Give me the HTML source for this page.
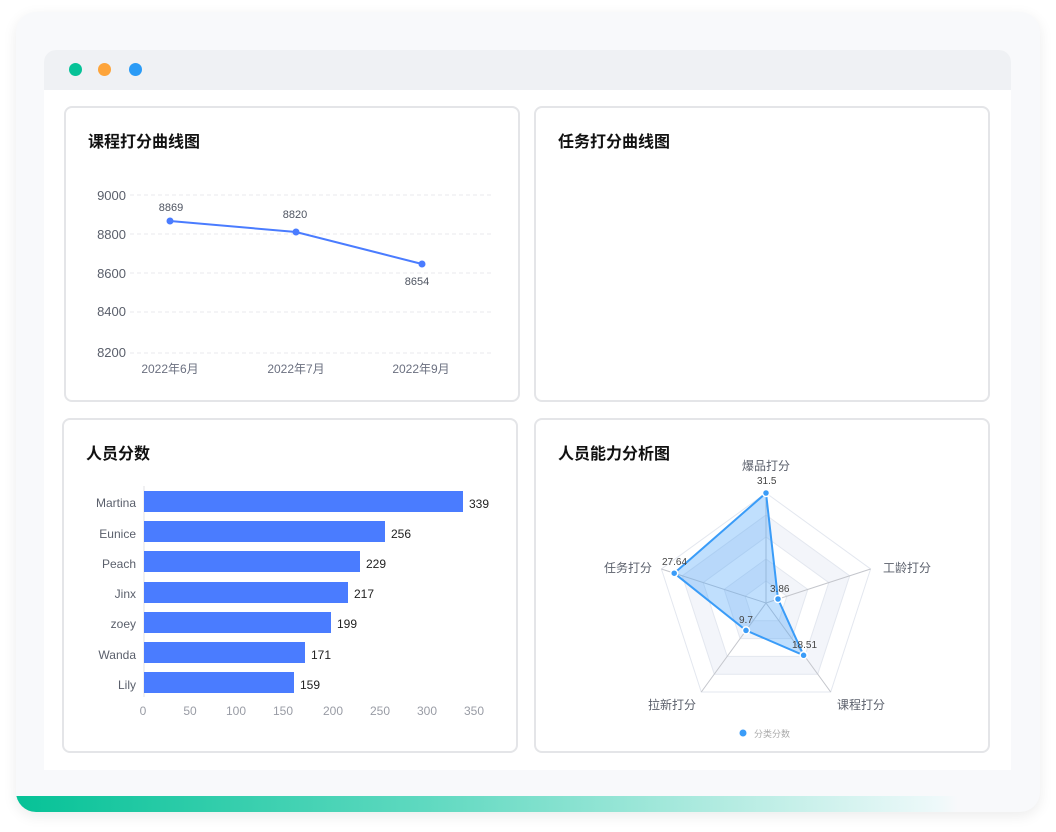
<!DOCTYPE html>
<html><head><meta charset="utf-8">
<style>
html,body{margin:0;padding:0;width:1056px;height:832px;background:#fff;overflow:hidden;font-family:"Liberation Sans","Noto Sans CJK SC",sans-serif}
.outer{position:absolute;left:16px;top:12px;width:1024px;height:800px;background:#f8f9fb;border-radius:20px;box-shadow:0 4px 14px rgba(0,0,0,0.08);overflow:hidden}
.grad{position:absolute;left:0;top:784px;width:1024px;height:16px;background:linear-gradient(90deg,#06c297 0%,#5fd9c0 40%,#b5ece2 70%,#eef9fa 90%,rgba(248,249,251,0) 92%)}
.win{position:absolute;left:44px;top:50px;width:967px;height:720px;background:#fff;border-radius:12px 12px 0 0;overflow:hidden}
.bar{position:absolute;left:0;top:0;width:967px;height:40px;background:#eff1f4}
.dot{position:absolute;top:13px;width:13px;height:13px;border-radius:50%}
.card{position:absolute;border:2px solid #e4e5e8;border-radius:8px;background:#fff;box-sizing:border-box}
.t{position:absolute;left:22px;top:20px;font-size:16px;font-weight:bold;color:#111}
svg{position:absolute;left:0;top:0}
</style></head><body>
<div class="outer"><div class="grad"></div></div>
<div class="win"><div class="bar">
<div class="dot" style="left:25px;background:#06c297"></div>
<div class="dot" style="left:54px;background:#fda43a"></div>
<div class="dot" style="left:85px;background:#2a9bf6"></div>
</div></div>
<div class="card" style="left:64px;top:106px;width:456px;height:296px"><div class="t">课程打分曲线图</div></div>
<div class="card" style="left:534px;top:106px;width:456px;height:296px"><div class="t">任务打分曲线图</div></div>
<div class="card" style="left:62px;top:418px;width:456px;height:335px"><div class="t">人员分数</div></div>
<div class="card" style="left:534px;top:418px;width:456px;height:335px"><div class="t">人员能力分析图</div></div>
<svg width="1056" height="832" font-family="Liberation Sans, Noto Sans CJK SC, sans-serif">
<g stroke="#e8e9ec" stroke-dasharray="4,3" stroke-width="1">
<line x1="130" y1="195" x2="492" y2="195"/><line x1="130" y1="234" x2="492" y2="234"/><line x1="130" y1="273" x2="492" y2="273"/><line x1="130" y1="312" x2="492" y2="312"/><line x1="130" y1="353" x2="492" y2="353"/>
</g>
<g font-size="13" fill="#5a5f6b" text-anchor="end">
<text x="126" y="200">9000</text><text x="126" y="239">8800</text><text x="126" y="278">8600</text><text x="126" y="316">8400</text><text x="126" y="357">8200</text>
</g>
<g font-size="12" fill="#6b7080" text-anchor="middle">
<text x="170" y="373">2022年6月</text><text x="296" y="373">2022年7月</text><text x="421" y="373">2022年9月</text>
</g>
<polyline points="170,221 296,232 422,264" fill="none" stroke="#4a7cff" stroke-width="2"/>
<g fill="#4a7cff"><circle cx="170" cy="221" r="3.5"/><circle cx="296" cy="232" r="3.5"/><circle cx="422" cy="264" r="3.5"/></g>
<g font-size="11" fill="#4e5461" text-anchor="middle">
<text x="171" y="211">8869</text><text x="295" y="218">8820</text><text x="417" y="285">8654</text>
</g>
<line x1="144" y1="486" x2="144" y2="697" stroke="#e0e2e6"/>
<g fill="#4a7cff">
<rect x="144" y="491" width="319" height="21"/>
<rect x="144" y="521" width="241" height="21"/>
<rect x="144" y="551" width="216" height="21"/>
<rect x="144" y="582" width="204" height="21"/>
<rect x="144" y="612" width="187" height="21"/>
<rect x="144" y="642" width="161" height="21"/>
<rect x="144" y="672" width="150" height="21"/>
</g>
<g font-size="12" fill="#5a5f6b" text-anchor="end">
<text x="136" y="507">Martina</text><text x="136" y="538">Eunice</text><text x="136" y="568">Peach</text><text x="136" y="598">Jinx</text><text x="136" y="628">zoey</text><text x="136" y="659">Wanda</text><text x="136" y="689">Lily</text>
</g>
<g font-size="12" fill="#222">
<text x="469" y="508">339</text><text x="391" y="538">256</text><text x="366" y="568">229</text><text x="354" y="598">217</text><text x="337" y="628">199</text><text x="311" y="659">171</text><text x="300" y="689">159</text>
</g>
<g font-size="12" fill="#999ca5" text-anchor="middle">
<text x="143" y="715">0</text><text x="190" y="715">50</text><text x="236" y="715">100</text><text x="283" y="715">150</text><text x="333" y="715">200</text><text x="380" y="715">250</text><text x="427" y="715">300</text><text x="474" y="715">350</text>
</g>
<path fill-rule="evenodd" fill="#f3f5fa" d="M766,515 L849.7,575.8 L817.7,674.2 L714.3,674.2 L682.3,575.8Z M766,537 L828.8,582.6 L804.8,656.4 L727.2,656.4 L703.2,582.6Z"/>
<path fill-rule="evenodd" fill="#f3f5fa" d="M766,559 L807.8,589.4 L791.9,638.6 L740.1,638.6 L724.2,589.4Z M766,581 L786.9,596.2 L778.9,620.8 L753.1,620.8 L745.1,596.2Z"/>
<g fill="none" stroke="#e3e7ef" stroke-width="1">
<path d="M766,493 L870.6,569 L830.7,692 L701.3,692 L661.4,569Z"/>
<path d="M766,515 L849.7,575.8 L817.7,674.2 L714.3,674.2 L682.3,575.8Z"/>
<path d="M766,537 L828.8,582.6 L804.8,656.4 L727.2,656.4 L703.2,582.6Z"/>
<path d="M766,559 L807.8,589.4 L791.9,638.6 L740.1,638.6 L724.2,589.4Z"/>
<path d="M766,581 L786.9,596.2 L778.9,620.8 L753.1,620.8 L745.1,596.2Z"/>
</g>
<g stroke="#c4c6cc" stroke-width="1">
<line x1="766" y1="603" x2="766" y2="493"/><line x1="766" y1="603" x2="870.6" y2="569"/><line x1="766" y1="603" x2="830.7" y2="692"/><line x1="766" y1="603" x2="701.3" y2="692"/><line x1="766" y1="603" x2="661.4" y2="569"/>
</g>
<path d="M766,493 L778,599 L803.6,655.3 L746,630.4 L674.2,573.2Z" fill="rgba(74,163,250,0.35)" stroke="#3a9cf8" stroke-width="2"/>
<g fill="#3a9cf8" stroke="#fff" stroke-width="1.5">
<circle cx="766" cy="493" r="3.5"/><circle cx="778" cy="599" r="3.5"/><circle cx="803.6" cy="655.3" r="3.5"/><circle cx="746" cy="630.4" r="3.5"/><circle cx="674.2" cy="573.2" r="3.5"/>
</g>
<g font-size="10" fill="#444">
<text x="757" y="484">31.5</text><text x="662" y="565">27.64</text><text x="770" y="592">3.86</text><text x="739" y="623">9.7</text><text x="792" y="648">18.51</text>
</g>
<g font-size="12" fill="#5a5f6b">
<text x="742" y="470">爆品打分</text><text x="883" y="572">工龄打分</text><text x="604" y="572">任务打分</text><text x="648" y="709">拉新打分</text><text x="837" y="709">课程打分</text>
</g>
<circle cx="743" cy="733" r="3.5" fill="#3a9cf8"/>
<text x="754" y="737" font-size="9" fill="#aaa">分类分数</text>
</svg>
</body></html>
